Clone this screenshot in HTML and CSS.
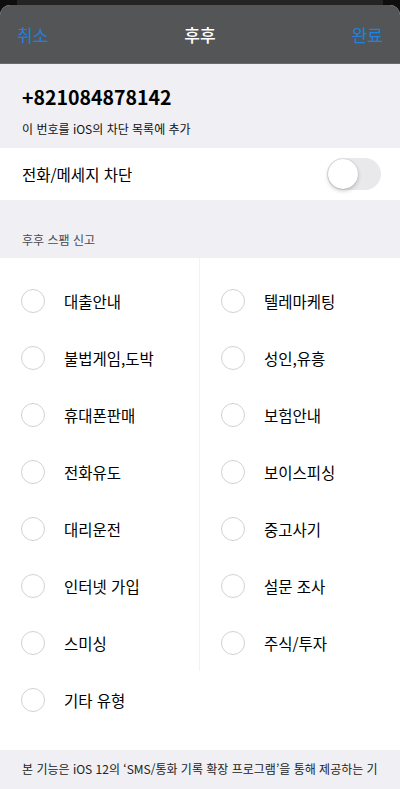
FILE: index.html
```html
<!DOCTYPE html>
<html lang="ko">
<head>
    <meta charset="UTF-8">
    <meta name="viewport" content="width=device-width, initial-scale=1.0">
    <title>후후 차단</title>
    <link rel="stylesheet" href="styles.css">
</head>
<body>
    <div class="back-card"></div>
    <div class="sheet">
        <div class="navbar">
            <span class="nav-btn">취소</span>
            <span class="nav-title">후후</span>
            <span class="nav-btn">완료</span>
        </div>

        <div class="info">
            <div class="phone">+821084878142</div>
            <div class="info-sub">이 번호를 iOS의 차단 목록에 추가</div>
        </div>

        <div class="block-row">
            <span>전화/메세지 차단</span>
            <div class="toggle"><div class="knob"></div></div>
        </div>

        <div class="section-head">후후 스팸 신고</div>

        <div class="report">
            <div class="columns">
                <div class="col col-left">
                    <div class="option"><span class="radio"></span>대출안내</div>
                    <div class="option"><span class="radio"></span>불법게임,도박</div>
                    <div class="option"><span class="radio"></span>휴대폰판매</div>
                    <div class="option"><span class="radio"></span>전화유도</div>
                    <div class="option"><span class="radio"></span>대리운전</div>
                    <div class="option"><span class="radio"></span>인터넷 가입</div>
                    <div class="option"><span class="radio"></span>스미싱</div>
                </div>
                <div class="col">
                    <div class="option"><span class="radio"></span>텔레마케팅</div>
                    <div class="option"><span class="radio"></span>성인,유흥</div>
                    <div class="option"><span class="radio"></span>보험안내</div>
                    <div class="option"><span class="radio"></span>보이스피싱</div>
                    <div class="option"><span class="radio"></span>중고사기</div>
                    <div class="option"><span class="radio"></span>설문 조사</div>
                    <div class="option"><span class="radio"></span>주식/투자</div>
                </div>
            </div>
            <div class="option"><span class="radio"></span>기타 유형</div>
        </div>

        <div class="footer">본 기능은 iOS 12의 ‘SMS/통화 기록 확장 프로그램’을 통해 제공하는 기능입니다.</div>
    </div>
</body>
</html>
```

FILE: styles.css
```css
html, body {
    height: 789px;
    overflow: hidden;
}
body {
    margin: 0;
    padding: 0;
    background-color: #0e0e0e;
    font-family: "Noto Sans CJK KR", "Noto Sans", sans-serif;
    color: #111;
    position: relative;
}
.back-card {
    position: absolute;
    top: 0;
    left: 17px;
    right: 17px;
    height: 20px;
    background-color: #242424;
    border-radius: 0 0 10px 10px;
}
.sheet {
    position: relative;
    margin-top: 5px;
    background-color: #efeff4;
    border-radius: 10px 10px 0 0;
    overflow: hidden;
}
.navbar {
    height: 58px;
    background-color: #545557;
    border-bottom: 1px solid #6a6b6d;
    display: flex;
    align-items: center;
    justify-content: space-between;
    padding: 0 17px 0 17px;
}
.nav-btn {
    color: #1d82e2;
    font-size: 17px;
}
.nav-title {
    color: #fff;
    font-size: 17px;
    font-weight: 500;
}
.info {
    height: 84px;
    padding: 0 22px;
    box-sizing: border-box;
    padding-top: 19px;
}
.phone {
    font-size: 19.5px;
    font-weight: 700;
    line-height: 28px;
    color: #000;
}
.info-sub {
    font-size: 12px;
    line-height: 18px;
    margin-top: 9px;
    color: #111;
}
.block-row {
    height: 52px;
    background-color: #fff;
    display: flex;
    align-items: center;
    justify-content: space-between;
    padding: 0 19px 0 22px;
    font-size: 15.5px;
    color: #000;
}
.toggle {
    width: 54px;
    height: 32px;
    border-radius: 16px;
    background-color: #e9e9eb;
    position: relative;
}
.knob {
    position: absolute;
    top: 1px;
    left: 1px;
    width: 30px;
    height: 30px;
    border-radius: 50%;
    background-color: #fff;
    box-shadow: 0 2px 4px rgba(0, 0, 0, 0.2), 0 0 1px rgba(0, 0, 0, 0.25);
}
.section-head {
    height: 58px;
    box-sizing: border-box;
    padding: 31px 22px 0;
    font-size: 12px;
    line-height: 18px;
    color: #4a4a4f;
}
.report {
    background-color: #fff;
    padding-bottom: 22px;
}
.columns {
    display: grid;
    grid-template-columns: 200px 200px;
}
.col {
    padding-top: 14px;
}
.col-left {
    border-right: 1px solid #f2f2f4;
}
.option {
    height: 57px;
    display: flex;
    align-items: center;
    padding-left: 21px;
    font-size: 15.5px;
    color: #000;
}
.radio {
    width: 22px;
    height: 22px;
    border: 1px solid #d2d2d6;
    border-radius: 50%;
    margin-right: 19px;
    flex-shrink: 0;
}
.footer {
    padding: 5px 22px 0;
    font-size: 12px;
    line-height: 28px;
    color: #222;
}
```
